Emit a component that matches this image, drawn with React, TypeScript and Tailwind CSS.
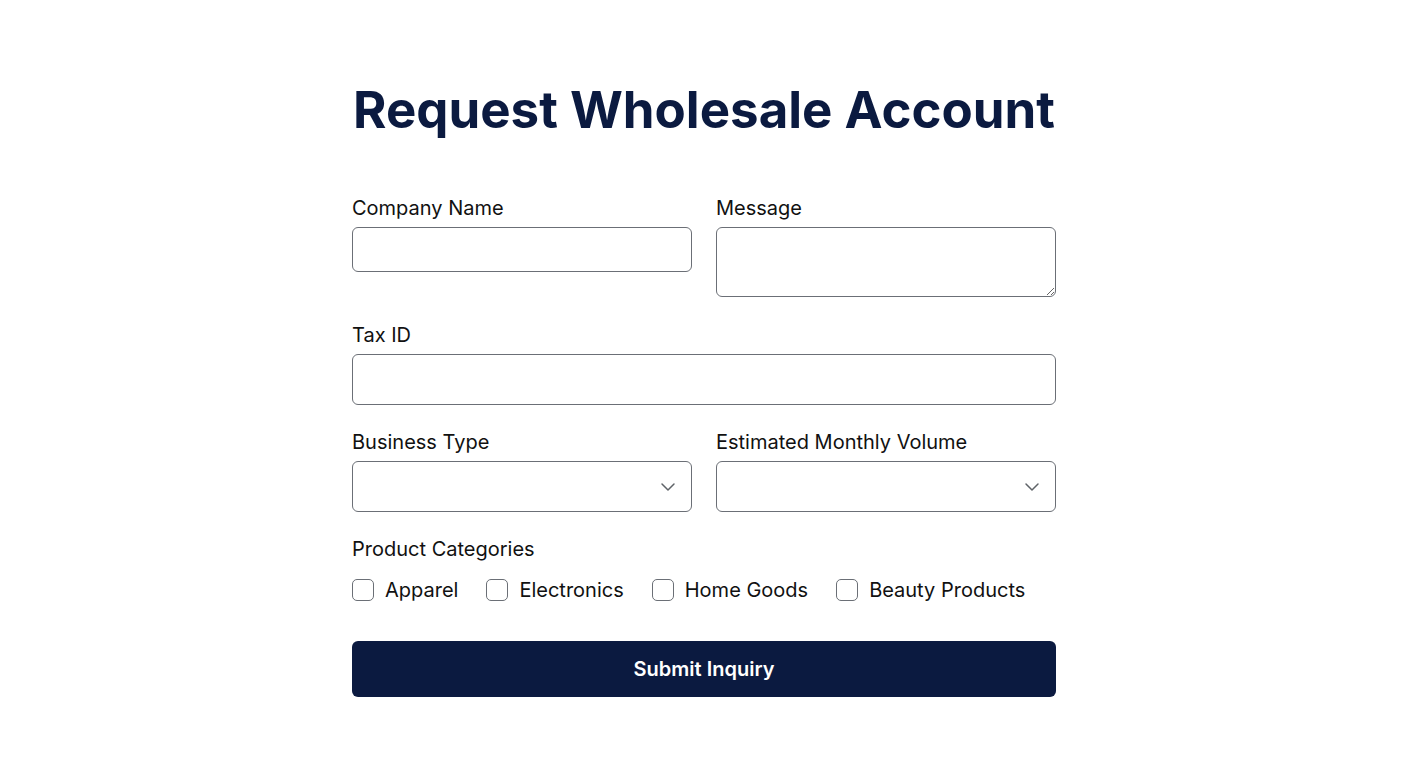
import { ChevronDown } from 'lucide-react';

const categories = ['Apparel', 'Electronics', 'Home Goods', 'Beauty Products'];

function FieldLabel({ children }: { children: React.ReactNode }) {
  return <label className="block text-[20px] leading-6 text-[#111111] mb-[7px]">{children}</label>;
}

function SelectField({ label }: { label: string }) {
  return (
    <div>
      <FieldLabel>{label}</FieldLabel>
      <div className="relative">
        <select className="appearance-none w-full h-[51px] rounded-md border border-[#6b6f76] bg-white px-4 text-[18px] outline-none">
          <option value=""></option>
        </select>
        <ChevronDown
          className="pointer-events-none absolute right-[12px] top-1/2 -translate-y-1/2 text-[#5f6368]"
          size={24}
          strokeWidth={1.5}
        />
      </div>
    </div>
  );
}

export default function App() {
  return (
    <div className="min-h-screen bg-white flex justify-center pt-[84px] font-['Inter',sans-serif]">
      <form className="w-[704px]" onSubmit={(e) => e.preventDefault()}>
        <h1 className="text-center text-[51px] leading-none font-bold text-[#0b1a40] mb-[61px]">
          Request Wholesale Account
        </h1>

        <div className="grid grid-cols-2 gap-x-6 items-start">
          <div>
            <FieldLabel>Company Name</FieldLabel>
            <input className="w-full h-[45px] rounded-md border border-[#6b6f76] px-4 text-[18px] outline-none" />
          </div>
          <div>
            <FieldLabel>Message</FieldLabel>
            <textarea className="block w-full h-[70px] rounded-md border border-[#6b6f76] px-4 py-2 text-[18px] outline-none resize-y" />
          </div>
        </div>

        <div className="mt-[26px]">
          <FieldLabel>Tax ID</FieldLabel>
          <input className="w-full h-[51px] rounded-md border border-[#6b6f76] px-4 text-[18px] outline-none" />
        </div>

        <div className="grid grid-cols-2 gap-x-6 mt-[25px]">
          <SelectField label="Business Type" />
          <SelectField label="Estimated Monthly Volume" />
        </div>

        <div className="mt-[25px]">
          <FieldLabel>Product Categories</FieldLabel>
          <div className="flex items-center gap-[28px] mt-[15px]">
            {categories.map((c) => (
              <label key={c} className="flex items-center gap-[11px] text-[20px] leading-7 text-[#111111]">
                <input
                  type="checkbox"
                  className="appearance-none w-[22px] h-[22px] rounded-[5px] border border-[#6b6f76] bg-white"
                />
                {c}
              </label>
            ))}
          </div>
        </div>

        <button
          type="submit"
          className="mt-[37px] w-full h-[56px] rounded-md bg-[#0b1a40] text-white text-[20px] font-semibold"
        >
          Submit Inquiry
        </button>
      </form>
    </div>
  );
}
